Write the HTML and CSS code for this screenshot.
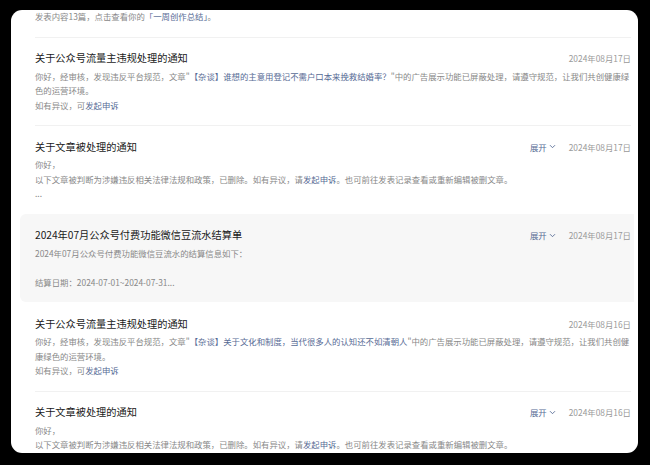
FILE: index.html
```html
<!DOCTYPE html>
<html lang="zh-CN">
<head>
    <meta charset="UTF-8">
    <meta name="viewport" content="width=device-width, initial-scale=1.0">
    <title>系统通知</title>
    <link rel="stylesheet" href="styles.css">
</head>
<body>
    <div class="panel">
        <div class="notice first">
            <div class="notice-inner">
                <p class="text">发表内容13篇，点击查看你的<a class="link">「一周创作总结」</a>。</p>
            </div>
        </div>

        <div class="notice">
            <div class="notice-inner">
                <div class="head">
                    <h3 class="title">关于公众号流量主违规处理的通知</h3>
                    <div class="meta">
                        <span class="date">2024年08月17日</span>
                    </div>
                </div>
                <p class="text">你好，经审核，发现违反平台规范，文章"<a class="link">【杂谈】谁想的主意用登记不需户口本来挽救结婚率？</a>"中的广告展示功能已屏蔽处理，请遵守规范，让我们共创健康绿色的运营环境。</p>
                <p class="text">如有异议，可<a class="link">发起申诉</a></p>
            </div>
        </div>

        <div class="notice">
            <div class="notice-inner">
                <div class="head">
                    <h3 class="title">关于文章被处理的通知</h3>
                    <div class="meta">
                        <a class="toggle">展开
                            <svg width="7" height="5" viewBox="0 0 7 5"><path d="M1 1.2l2.5 2.5L6 1.2" fill="none" stroke="#576b95" stroke-width="0.9"/></svg>
                        </a>
                        <span class="date">2024年08月17日</span>
                    </div>
                </div>
                <p class="text">你好，</p>
                <p class="text">以下文章被判断为涉嫌违反相关法律法规和政策，已删除。如有异议，请<a class="link">发起申诉</a>。也可前往发表记录查看或重新编辑被删文章。</p>
                <p class="text">...</p>
            </div>
        </div>

        <div class="notice active">
            <div class="notice-inner">
                <div class="head">
                    <h3 class="title">2024年07月公众号付费功能微信豆流水结算单</h3>
                    <div class="meta">
                        <a class="toggle">展开
                            <svg width="7" height="5" viewBox="0 0 7 5"><path d="M1 1.2l2.5 2.5L6 1.2" fill="none" stroke="#576b95" stroke-width="0.9"/></svg>
                        </a>
                        <span class="date">2024年08月17日</span>
                    </div>
                </div>
                <p class="text">2024年07月公众号付费功能微信豆流水的结算信息如下：</p>
                <p class="text">&nbsp;</p>
                <p class="text">结算日期：2024-07-01~2024-07-31...</p>
            </div>
        </div>

        <div class="notice no-line">
            <div class="notice-inner">
                <div class="head">
                    <h3 class="title">关于公众号流量主违规处理的通知</h3>
                    <div class="meta">
                        <span class="date">2024年08月16日</span>
                    </div>
                </div>
                <p class="text">你好，经审核，发现违反平台规范，文章"<a class="link">【杂谈】关于文化和制度，当代很多人的认知还不如清朝人</a>"中的广告展示功能已屏蔽处理，请遵守规范，让我们共创健康绿色的运营环境。</p>
                <p class="text">如有异议，可<a class="link">发起申诉</a></p>
            </div>
        </div>

        <div class="notice">
            <div class="notice-inner">
                <div class="head">
                    <h3 class="title">关于文章被处理的通知</h3>
                    <div class="meta">
                        <a class="toggle">展开
                            <svg width="7" height="5" viewBox="0 0 7 5"><path d="M1 1.2l2.5 2.5L6 1.2" fill="none" stroke="#576b95" stroke-width="0.9"/></svg>
                        </a>
                        <span class="date">2024年08月16日</span>
                    </div>
                </div>
                <p class="text">你好，</p>
                <p class="text">以下文章被判断为涉嫌违反相关法律法规和政策，已删除。如有异议，请<a class="link">发起申诉</a>。也可前往发表记录查看或重新编辑被删文章。</p>
                <p class="text">...</p>
            </div>
        </div>
    </div>
</body>
</html>
```

FILE: styles.css
```css
html, body {
    margin: 0;
    background: #000;
}
body {
    font-family: "Noto Sans CJK SC", "Liberation Sans", sans-serif;
    padding: 10px 12px 0 11px;
}
.panel {
    background: #fff;
    border-radius: 11px;
    height: 443px;
    overflow: hidden;
    padding: 0 4px 0 9px;
}
.notice {
    padding: 0 3px 0 15px;
    border-radius: 6px 0 0 6px;
}
.notice-inner {
    border-top: 1px solid #f1f1f1;
    padding: 12.5px 0 13.3px;
}
.notice.first .notice-inner {
    border-top: none;
    padding-top: 0;
    margin-top: -1px;
}
.notice.active {
    background: #f7f7f7;
}
.notice.active .notice-inner,
.notice.no-line .notice-inner {
    border-top-color: transparent;
}
.head {
    display: flex;
    justify-content: space-between;
    align-items: center;
    margin-bottom: 2.5px;
}
.title {
    margin: 0;
    font-size: 10.2px;
    line-height: 16px;
    font-weight: 400;
    color: #1a1a1a;
}
.meta {
    display: flex;
    align-items: center;
    font-size: 8.4px;
    line-height: 14px;
}
.toggle {
    color: #576b95;
    display: flex;
    align-items: center;
    margin-right: 13px;
}
.toggle svg {
    margin-left: 2px;
}
.date {
    color: #999;
}
.text {
    margin: 0;
    font-size: 8.4px;
    line-height: 14.4px;
    color: #888;
}
.link {
    color: #576b95;
}
```
